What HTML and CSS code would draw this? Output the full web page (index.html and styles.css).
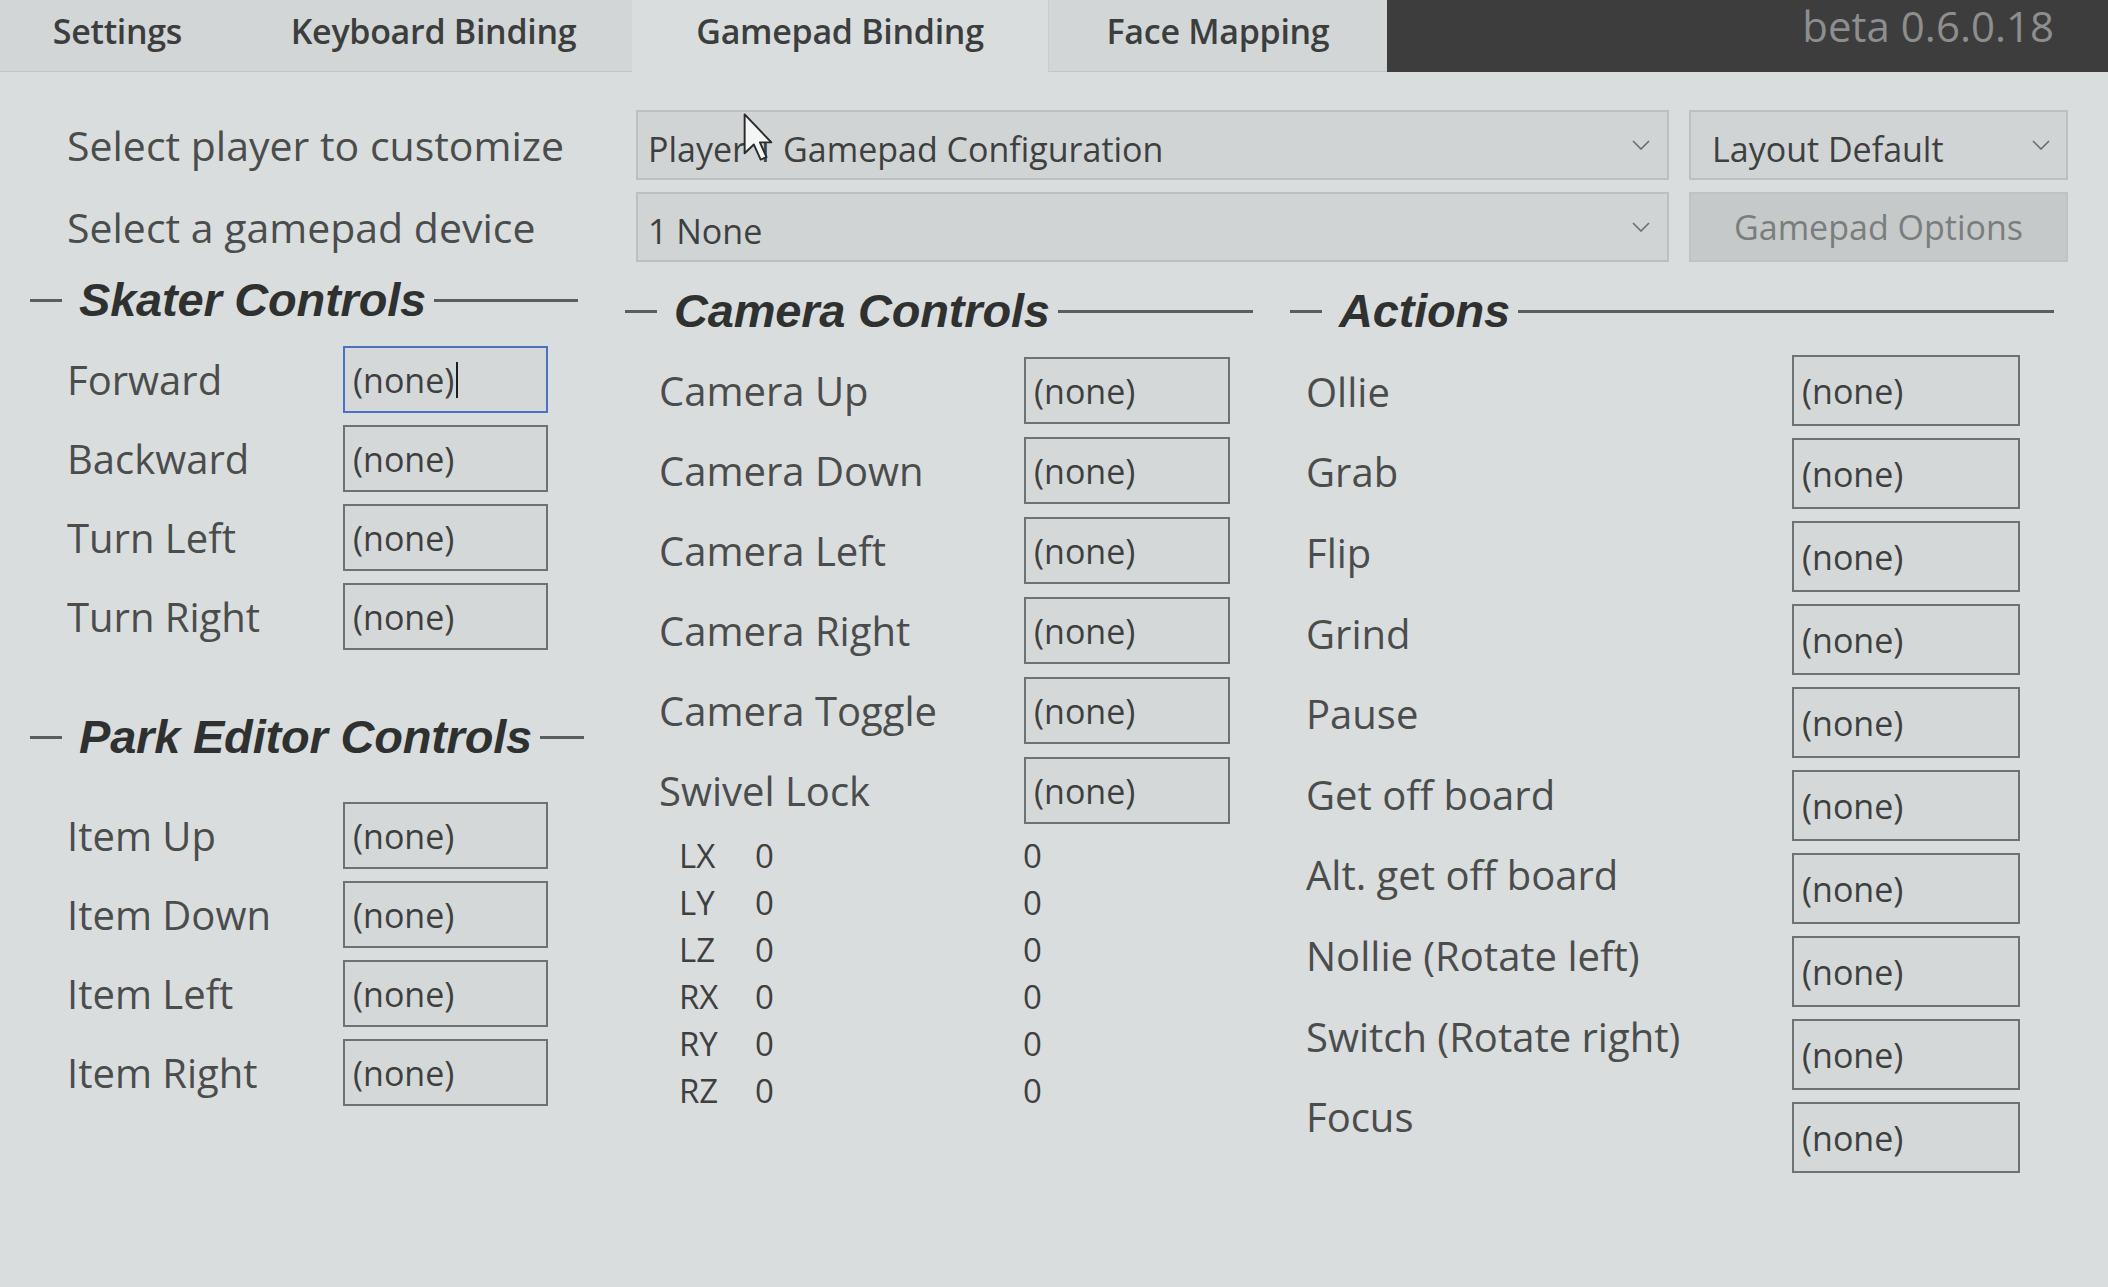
FILE: index.html
```html
<!DOCTYPE html>
<html lang="en">
<head>
<meta charset="utf-8">
<title>Gamepad Binding</title>
<link rel="stylesheet" href="styles.css">
</head>
<body>
<div class="app">
  <div class="tabbar">
    <div class="tab tab-settings">Settings</div>
    <div class="tab tab-keyboard">Keyboard Binding</div>
    <div class="tab tab-gamepad active">Gamepad Binding</div>
    <div class="tab tab-face">Face Mapping</div>
    <div class="titlebar"><span class="version">beta 0.6.0.18</span></div>
  </div>

  <div class="selectors">
    <div class="sel-label">Select player to customize</div>
    <div class="dropdown">
      <span class="dd-text">Player 1 Gamepad Configuration</span>
      <svg class="chev" viewBox="0 0 18 10" width="18" height="10"><polyline points="1,1 9,9 17,1" fill="none" stroke="#6b6e6e" stroke-width="1.6"/></svg>
      <svg class="cursor" viewBox="0 0 13 21" width="32" height="51"><path d="M1 1 L1 17 L4.8 13.4 L7.6 19.6 L10 18.6 L7.3 12.5 L12 12.5 Z" fill="#f4f6f6" stroke="#2a2a2a" stroke-width="0.8" stroke-linejoin="round"/></svg>
    </div>
    <div class="dropdown small">
      <span class="dd-text">Layout Default</span>
      <svg class="chev" viewBox="0 0 18 10" width="18" height="10"><polyline points="1,1 9,9 17,1" fill="none" stroke="#6b6e6e" stroke-width="1.6"/></svg>
    </div>

    <div class="sel-label">Select a gamepad device</div>
    <div class="dropdown">
      <span class="dd-text">1 None</span>
      <svg class="chev" viewBox="0 0 18 10" width="18" height="10"><polyline points="1,1 9,9 17,1" fill="none" stroke="#6b6e6e" stroke-width="1.6"/></svg>
    </div>
    <div class="button disabled">Gamepad Options</div>
  </div>

  <div class="sections">
    <div class="col col-skater">
      <div class="header">
        <span class="dash"></span><span class="htext">Skater Controls</span><span class="hline"></span>
      </div>
      <div class="rows rows-skater">
        <div class="row"><span class="label">Forward</span><span class="box focused">(none)<span class="caret"></span></span></div>
        <div class="row"><span class="label">Backward</span><span class="box">(none)</span></div>
        <div class="row"><span class="label">Turn Left</span><span class="box">(none)</span></div>
        <div class="row"><span class="label">Turn Right</span><span class="box">(none)</span></div>
      </div>
      <div class="header header-park">
        <span class="dash"></span><span class="htext">Park Editor Controls</span><span class="hline short"></span>
      </div>
      <div class="rows rows-park">
        <div class="row"><span class="label">Item Up</span><span class="box">(none)</span></div>
        <div class="row"><span class="label">Item Down</span><span class="box">(none)</span></div>
        <div class="row"><span class="label">Item Left</span><span class="box">(none)</span></div>
        <div class="row"><span class="label">Item Right</span><span class="box">(none)</span></div>
      </div>
    </div>

    <div class="col col-camera">
      <div class="header">
        <span class="dash"></span><span class="htext">Camera Controls</span><span class="hline"></span>
      </div>
      <div class="rows rows-camera">
        <div class="row"><span class="label">Camera Up</span><span class="box">(none)</span></div>
        <div class="row"><span class="label">Camera Down</span><span class="box">(none)</span></div>
        <div class="row"><span class="label">Camera Left</span><span class="box">(none)</span></div>
        <div class="row"><span class="label">Camera Right</span><span class="box">(none)</span></div>
        <div class="row"><span class="label">Camera Toggle</span><span class="box">(none)</span></div>
        <div class="row"><span class="label">Swivel Lock</span><span class="box">(none)</span></div>
      </div>
      <div class="axes">
        <span class="ax">LX</span><span class="av">0</span><span class="av2">0</span>
        <span class="ax">LY</span><span class="av">0</span><span class="av2">0</span>
        <span class="ax">LZ</span><span class="av">0</span><span class="av2">0</span>
        <span class="ax">RX</span><span class="av">0</span><span class="av2">0</span>
        <span class="ax">RY</span><span class="av">0</span><span class="av2">0</span>
        <span class="ax">RZ</span><span class="av">0</span><span class="av2">0</span>
      </div>
    </div>

    <div class="col col-actions">
      <div class="header">
        <span class="dash"></span><span class="htext">Actions</span><span class="hline"></span>
      </div>
      <div class="actions">
        <div class="action-labels">
          <span class="alabel">Ollie</span>
          <span class="alabel">Grab</span>
          <span class="alabel">Flip</span>
          <span class="alabel">Grind</span>
          <span class="alabel">Pause</span>
          <span class="alabel">Get off board</span>
          <span class="alabel">Alt. get off board</span>
          <span class="alabel">Nollie (Rotate left)</span>
          <span class="alabel">Switch (Rotate right)</span>
          <span class="alabel">Focus</span>
        </div>
        <div class="action-boxes">
          <span class="box abox">(none)</span>
          <span class="box abox">(none)</span>
          <span class="box abox">(none)</span>
          <span class="box abox">(none)</span>
          <span class="box abox">(none)</span>
          <span class="box abox">(none)</span>
          <span class="box abox">(none)</span>
          <span class="box abox">(none)</span>
          <span class="box abox">(none)</span>
          <span class="box abox">(none)</span>
        </div>
      </div>
    </div>
  </div>
</div>
</body>
</html>
```

FILE: styles.css
```css
* { box-sizing: border-box; }

html, body {
  margin: 0;
  padding: 0;
}

body {
  width: 2108px;
  height: 1287px;
  overflow: hidden;
  background: #dadddd;
  font-family: "Open Sans", "Noto Sans", sans-serif;
  color: #4b4d4d;
}

.app {
  width: 2108px;
  height: 1287px;
}

/* ---------- tab bar ---------- */
.tabbar {
  display: flex;
  height: 72px;
}

.tab {
  height: 72px;
  padding-top: 10px;
  text-align: center;
  font-size: 34px;
  font-weight: 600;
  line-height: 42px;
  color: #3c3e3e;
  background: #d3d6d6;
  border-bottom: 1px solid #c3c6c6;
  letter-spacing: -0.3px;
}

.tab-settings { width: 235px; }
.tab-keyboard { width: 397px; }
.tab-gamepad  { width: 416px; }
.tab-face     { width: 339px; border-left: 1px solid #c8cbcb; }

.tab.active {
  background: #dadddd;
  border-bottom-color: transparent;
}

.titlebar {
  flex: 1;
  height: 72px;
  background: #3e3d3d;
  display: flex;
  justify-content: flex-end;
  align-items: flex-start;
  padding-right: 54px;
  padding-top: 2px;
}

.version {
  font-size: 42px;
  line-height: 48px;
  color: #8d8e8e;
}

/* ---------- selectors ---------- */
.selectors {
  margin-top: 38px;
  padding-left: 67px;
  display: grid;
  grid-template-columns: 549px 1033px 379px;
  grid-auto-rows: 70px;
  column-gap: 20px;
  row-gap: 12px;
}

.sel-label {
  align-self: center;
  font-size: 41px;
  color: #4b4d4d;
  white-space: nowrap;
}

.dropdown {
  position: relative;
  display: flex;
  align-items: center;
  justify-content: space-between;
  background: #d1d4d4;
  border: 2px solid #bdc0c0;
  padding-left: 10px;
  padding-right: 17px;
}

.dropdown.small {
  padding-left: 21px;
  padding-right: 16px;
}

.dd-text {
  font-size: 34px;
  color: #3e4040;
  white-space: nowrap;
  padding-top: 8px;
}

.chev { display: block; }

.cursor {
  position: absolute;
  left: 104px;
  top: 0px;
}

.button {
  display: flex;
  align-items: center;
  justify-content: center;
  font-size: 34px;
  background: #c6c9c9;
  border: 2px solid #c0c3c3;
}

.button.disabled { color: #7b7d7d; }

/* ---------- sections ---------- */
.sections {
  margin-top: 19px;
  padding-left: 30px;
  display: flex;
  align-items: flex-start;
}

.col-skater  { width: 548px; }
.col-camera  { width: 628px; margin-left: 47px; }
.col-actions { width: 764px; margin-left: 37px; }

.header {
  display: flex;
  align-items: center;
  height: 50px;
}

.dash {
  width: 32px;
  height: 3px;
  background: #5c5e5e;
  margin-right: 17px;
  flex: none;
}

.htext {
  font-family: "Liberation Sans", Arial, sans-serif;
  font-weight: bold;
  font-style: italic;
  font-size: 47px;
  line-height: 50px;
  color: #2f3131;
  white-space: nowrap;
  letter-spacing: -0.2px;
}

.hline {
  flex: 1;
  height: 3px;
  background: #5c5e5e;
  margin-left: 8px;
}

.hline.short {
  flex: none;
  width: 44px;
}

.col-skater > .header:first-child { margin-top: -6px; margin-bottom: 6px; }
.col-camera > .header:first-child,
.col-actions > .header:first-child { margin-top: 5px; margin-bottom: -5px; }

.rows {
  display: flex;
  flex-direction: column;
}

.row {
  display: grid;
  align-items: center;
}

.label {
  font-size: 40px;
  color: #4b4d4d;
  white-space: nowrap;
}

.box {
  display: flex;
  align-items: center;
  height: 67px;
  padding-left: 8px;
  font-size: 34px;
  color: #3e4040;
  background: #d5d8d8;
  border: 2px solid #6f7272;
}

.box.focused {
  border-color: #4a72c4;
}

.caret {
  display: inline-block;
  width: 2px;
  height: 36px;
  background: #1e1e1e;
  margin-left: 2px;
}

/* skater / park */
.rows-skater { margin-top: 21px; gap: 12px; }
.rows-park   { margin-top: 40px; gap: 12px; }
.header-park { margin-top: 62px; }

.col-skater .row {
  grid-template-columns: 313px 205px;
}
.col-skater .label { padding-left: 37px; }

/* camera */
.rows-camera { margin-top: 26px; gap: 13px; }

.col-camera .row {
  grid-template-columns: 399px 206px;
}
.col-camera .label { padding-left: 34px; }

.axes {
  margin-top: 8px;
  padding-left: 54px;
  display: grid;
  grid-template-columns: 76px 268px 40px;
  grid-auto-rows: 47px;
  align-items: center;
  font-size: 33px;
  color: #3e4040;
}

/* actions */
.actions {
  margin-top: 20px;
  display: grid;
  grid-template-columns: 502px 228px;
}

.action-labels {
  display: flex;
  flex-direction: column;
  padding-left: 16px;
}

.alabel {
  height: 80.6px;
  display: flex;
  align-items: center;
  font-size: 40px;
  color: #4b4d4d;
  white-space: nowrap;
}

.action-boxes {
  display: flex;
  flex-direction: column;
  gap: 12px;
  padding-top: 4px;
}

.abox {
  height: 71px;
}
```
